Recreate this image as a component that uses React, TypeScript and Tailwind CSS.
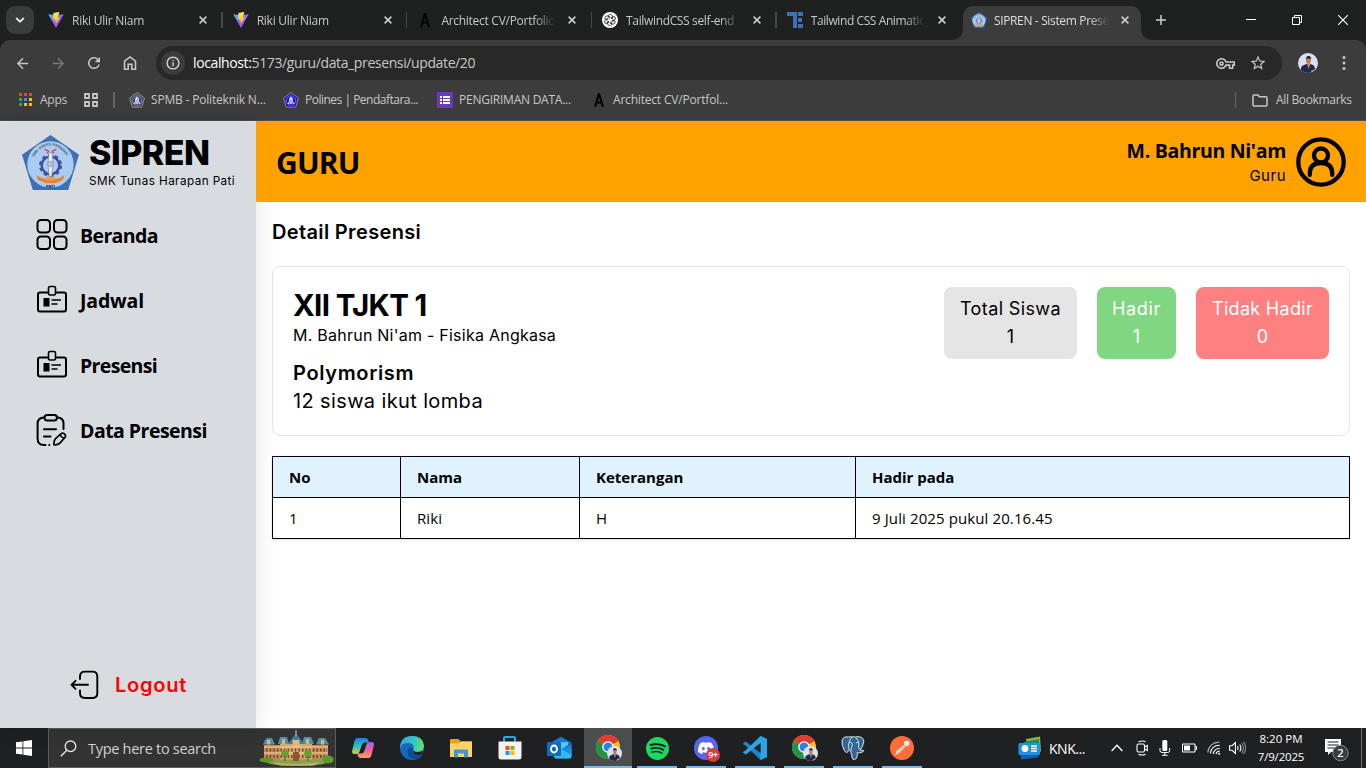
import React from "react";
import { SiSpotify, SiDiscord } from "react-icons/si";
import { MdArrowBack, MdArrowForward, MdRefresh, MdStarBorder, MdOutlineVpnKey } from "react-icons/md";

function ViteIcon() {
  return (
    <svg width="16" height="16" viewBox="0 0 16 16" className="shrink-0">
      <defs>
        <linearGradient id="viteBody" x1="0" y1="0" x2="0.7" y2="1">
          <stop offset="0" stopColor="#41d1ff" />
          <stop offset="0.5" stopColor="#8a6cff" />
          <stop offset="1" stopColor="#bd34fe" />
        </linearGradient>
        <linearGradient id="viteBolt" x1="0" y1="0" x2="0" y2="1">
          <stop offset="0" stopColor="#ffea83" />
          <stop offset="0.3" stopColor="#ffdd35" />
          <stop offset="1" stopColor="#ffa800" />
        </linearGradient>
      </defs>
      <path d="M0.3 2.2 L8 3.4 L15.7 2.2 L8.3 15.6 Q8 16 7.7 15.6 Z" fill="url(#viteBody)" />
      <path d="M11.4 0 L5.4 1 L5 7.6 L7.2 7.2 L6.6 9.6 L8 9.2 L7.4 12.6 L12 5.6 L9.8 5.9 Z" fill="url(#viteBolt)" />
    </svg>
  );
}

function CompassA() {
  return (
    <svg width="16" height="16" viewBox="0 0 16 16" className="shrink-0">
      <path d="M7.1 1h1.8l0.6 1.8L13 15h-2l-1.2-3.6H6.2L5 15H3L6.5 2.8zM8 5l-1.3 4.6h2.6z" fill="#050505" />
    </svg>
  );
}

function GptIcon() {
  return (
    <svg width="16" height="16" viewBox="0 0 16 16" className="shrink-0">
      <circle cx="8" cy="8" r="8" fill="#fff" />
      <g fill="none" stroke="#222" strokeWidth="0.8">
        {[0, 60, 120, 180, 240, 300].map((a) => (
          <path key={a} d="M8 6.2 L6.4 5.3 V3.9 a1.9 1.9 0 0 1 3.3 -1 L10.6 4.6 V7" transform={`rotate(${a} 8 8)`} />
        ))}
      </g>
    </svg>
  );
}

function TeIcon() {
  return (
    <svg width="16" height="16" viewBox="0 0 16 16" className="shrink-0" fill="#3f6fb8">
      <path d="M0 0h10v4H0z M6 4h4v12H6z M11 0h5v4h-5z M11 6h4v4h-4z M11 12h5v4h-5z" />
    </svg>
  );
}

function SchoolLogo({ className }: { className: string }) {
  return (
    <svg viewBox="0 0 58 56" className={className}>
      <path d="M29 0 L58 20 L47 56 H11 L0 20 Z" fill="#3f6fb5" />
      <circle cx="29" cy="30" r="23.6" fill="#a9cdf0" />
      <path id="logoArc" d="M11.500 23 Q29 -2 46.500 23" fill="none" />
      <text fontSize="4" fontFamily="Liberation Sans" fontWeight="700" fill="#4d5b73" textLength="42">
        <textPath href="#logoArc" startOffset="0.5" textLength="42">SMK TUNAS HARAPAN</textPath>
      </text>
      <circle cx="29" cy="31" r="9" fill="none" stroke="#3d4aa0" strokeWidth="2.400" />
      <circle cx="29" cy="31" r="10.800" fill="none" stroke="#3d4aa0" strokeWidth="1.800" strokeDasharray="3.600 3.300" />
      <path d="M27.400 18h3.200l1 11-1.200 13h-2.800l-1.200-13z" fill="#e9edf4" stroke="#6e7a8c" strokeWidth="0.600" />
      <circle cx="29" cy="29.500" r="3" fill="#b9c2cf" stroke="#7a8596" strokeWidth="0.500" />
      <path d="M23 14.500l4 2-1.600 2 M35 14.500l-4 2 1.600 2" stroke="#e0455a" strokeWidth="1.500" fill="none" />
      <path d="M15 41 Q29 50 43 41 L42 45.500 Q29 53 16 45.500 Z" fill="#ef7f2c" />
      <rect x="24.500" y="42.500" width="9" height="4" fill="#f39a4c" />
      <text x="29" y="54" textAnchor="middle" fontSize="4.200" fontFamily="Liberation Sans" fontWeight="700" fill="#111">
        PATI
      </text>
    </svg>
  );
}

function PolinesIcon({ blue, ring }: { blue: string; ring: string }) {
  return (
    <svg width="16" height="16" viewBox="0 0 16 16" className="shrink-0">
      <path d="M8 0.600 L15.500 6 L12.700 15.200 H3.300 L0.500 6 Z" fill={blue} stroke={ring} strokeWidth="0.900" strokeLinejoin="round" />
      <circle cx="8" cy="8.600" r="4.800" fill={blue} stroke="#b7bde8" strokeWidth="0.500" />
      <path d="M8 4.600l1.800 1.800v2.800l1.800 2.600H4.400l1.800-2.600V6.400z" fill="#f1efda" />
      <path d="M8 7v3.500M6.700 11.800V9.500M9.300 11.800V9.500" stroke={blue} strokeWidth="0.600" />
    </svg>
  );
}

function CloseIcon() {
  return (
    <svg width="8" height="8" viewBox="0 0 8 8" className="shrink-0">
      <path d="M0.600 0.600 L7.400 7.400 M7.400 0.600 L0.600 7.400" stroke="#cfcfcf" strokeWidth="1.500" />
    </svg>
  );
}

function Tab({ icon, title, last = false, tracking }: { icon: React.ReactNode; title: string; last?: boolean; tracking: string }) {
  return (
    <div className="flex h-10 w-[184.700px] shrink-0 items-center pl-[10px]">
      {icon}
      <div className="mt-px ml-2 w-[115px] overflow-hidden whitespace-nowrap text-[12px] text-[#c7c7c7] [mask-image:linear-gradient(to_right,#000_82%,transparent_99%)]">
        <span className={tracking}>{title}</span>
      </div>
      <div className="ml-[12px] flex flex-1 items-center justify-between">
        <CloseIcon />
        {!last && <div className="h-4 w-[1.5px] bg-[#464747]" />}
      </div>
    </div>
  );
}

function AvatarPhoto({ size }: { size: number }) {
  return (
    <svg width={size} height={size} viewBox="0 0 20 20" className="shrink-0">
      <defs>
        <clipPath id="avatarClip">
          <circle cx="10" cy="10" r="10" />
        </clipPath>
      </defs>
      <g clipPath="url(#avatarClip)">
        <rect width="20" height="20" fill="#dcdfee" />
        <path d="M3 20V15q0-2 3-3l2.500-1h4l2.500 1q2 1 2 4v4z" fill="#1d2a4f" />
        <path d="M9 11l1.500 5L12.500 11z" fill="#c9825f" />
        <ellipse cx="10.500" cy="7.800" rx="2.300" ry="3.200" fill="#b97a5c" />
        <path d="M8 7q-.3-4 2.600-4t2.500 4l-.8-1.600H8.800z" fill="#2a1c18" />
        <path d="M13 18l5-2v3l-4 1z" fill="#e9c65a" />
      </g>
    </svg>
  );
}

function BrowserChrome() {
  return (
    <div className="h-[121px] bg-[#1f2120] font-['Open_Sans',sans-serif]">
      <div className="flex h-10 items-center">
        <div className="ml-[6px] flex h-7 w-7 items-center justify-center rounded-[9px] bg-[#3a3b3b]">
          <svg width="10" height="6" viewBox="0 0 10 6">
            <path d="M1.200 1 L5 4.700 L8.800 1" fill="none" stroke="#e6e6e6" strokeWidth="1.800" />
          </svg>
        </div>
        <div className="ml-1 flex">
          <Tab icon={<ViteIcon />} title="Riki Ulir Niam" tracking="tracking-[-0.25px]" />
          <Tab icon={<ViteIcon />} title="Riki Ulir Niam" tracking="tracking-[-0.25px]" />
          <Tab icon={<CompassA />} title="Architect CV/Portfolio" tracking="tracking-[-0.28px]" />
          <Tab icon={<GptIcon />} title="TailwindCSS self-end" tracking="tracking-[-0.35px]" />
          <Tab icon={<TeIcon />} title="Tailwind CSS Animatio" tracking="tracking-[-0.41px]" last />
        </div>
        <div className="relative mt-[6px] ml-[1.5px] flex h-[34px] w-[178px] items-center rounded-t-[10px] bg-[#3c3c3c] pb-[6px] pl-2">
          <svg width="12" height="12" className="absolute -left-3 bottom-0">
            <path d="M12 0 V12 H0 Q12 12 12 0" fill="#3c3c3c" />
          </svg>
          <svg width="12" height="12" className="absolute -right-3 bottom-0">
            <path d="M0 0 V12 H12 Q0 12 0 0" fill="#3c3c3c" />
          </svg>
          <SchoolLogo className="h-4 w-4" />
          <div className="mt-px ml-[7px] w-[116px] overflow-hidden whitespace-nowrap text-[12px] text-[#dedede] [mask-image:linear-gradient(to_right,#000_82%,transparent_99%)]">
            <span className="tracking-[-0.35px]">SIPREN - Sistem Prese</span>
          </div>
          <div className="ml-[11px]">
            <CloseIcon />
          </div>
        </div>
        <svg width="10" height="10" viewBox="0 0 10 10" className="ml-[15px]">
          <path d="M5 0v10M0 5h10" stroke="#cfcfcf" strokeWidth="1.500" />
        </svg>
        <div className="ml-auto flex items-center pr-[18px]">
          <svg width="10" height="10" viewBox="0 0 10 10">
            <path d="M0 4.500h10" stroke="#fff" />
          </svg>
          <svg width="10" height="10" viewBox="0 0 10 10" className="ml-9" fill="none" stroke="#fff">
            <path d="M0.500 2.500h7v7h-7z M2.500 2.500v-2h7v7h-2" />
          </svg>
          <svg width="10" height="10" viewBox="0 0 10 10" className="ml-9">
            <path d="M0 0L10 10M10 0L0 10" stroke="#fff" strokeWidth="1.100" />
          </svg>
        </div>
      </div>
      <div className="h-[81px] rounded-t-[10px] border-b border-[#4a4b4b] bg-[#3c3c3c]">
        <div className="flex h-[46px] items-center pl-[13.500px] text-[#c7c7c7]">
          <MdArrowBack size={17} />
          <MdArrowForward size={17} className="ml-[19px] text-[#7b7b7b]" />
          <MdRefresh size={18} className="ml-[18.500px]" />
          <svg width="14" height="16" viewBox="0 0 14 16" className="ml-5" fill="none" stroke="#c7c7c7" strokeWidth="1.600">
            <path d="M1.500 6.200 L7 1.900 L12.500 6.200 V14.200 H8.800 V9.300 H5.200 V14.200 H1.500 Z" />
          </svg>
          <div className="ml-[19px] flex h-[34px] w-[1126px] items-center rounded-full bg-[#282828] pl-[5px]">
            <div className="flex h-6 w-6 items-center justify-center rounded-full bg-[#3c3c3c]">
              <svg width="14" height="14" viewBox="0 0 14 14" fill="none" stroke="#dcdcdc" strokeWidth="1.300">
                <circle cx="7" cy="7" r="5.900" />
                <path d="M7 6.200v4M7 3.700v1.400" />
              </svg>
            </div>
            <span className="mb-px ml-2 text-[14px] tracking-[-0.38px] whitespace-nowrap text-[#c7c7c7]">
              <span className="text-white">localhost:</span>5173/guru/data_presensi/update/20
            </span>
            <MdOutlineVpnKey size={19} className="mr-[14px] ml-auto" />
            <MdStarBorder size={18} className="mr-[15px]" />
          </div>
          <div className="ml-4">
            <AvatarPhoto size={20} />
          </div>
          <svg width="4" height="16" viewBox="0 0 4 16" className="ml-6" fill="#c7c7c7">
            <circle cx="2" cy="2.500" r="1.500" />
            <circle cx="2" cy="8" r="1.500" />
            <circle cx="2" cy="13.500" r="1.500" />
          </svg>
        </div>
        <div className="flex h-7 items-center pl-[19px] text-[12px] whitespace-nowrap text-[#c7c7c7]">
          <svg width="14" height="14" viewBox="0 0 14 14">
            <path d="M0 0h3v3H0zM5 0h3v3H5zM10 0h3v3h-3z" fill="#ea4335" />
            <path d="M0 5h3v3H0z" fill="#34a853" />
            <path d="M5 5h3v3H5z" fill="#4285f4" />
            <path d="M10 5h3v3h-3z" fill="#fbbc04" />
            <path d="M0 10h3v3H0z" fill="#34a853" />
            <path d="M5 10h3v3H5zM10 10h3v3h-3z" fill="#fbbc04" />
          </svg>
          <span className="ml-[7px] w-[44px] tracking-[-0.25px]">Apps</span>
          <svg width="14" height="14" viewBox="0 0 14 14" fill="none" stroke="#c7c7c7" strokeWidth="1.800">
            <path d="M1 1h4v4H1zM9 1h4v4H9zM1 9h4v4H1zM9 9h4v4H9z" />
          </svg>
          <div className="ml-[15px] h-4 w-[1.5px] bg-[#666]" />
          <div className="ml-[14px] flex w-[154px] items-center gap-[6.500px]">
            <PolinesIcon blue="#3d4486" ring="#a8a04c" />
            <span className="tracking-[-0.18px]">SPMB - Politeknik N...</span>
          </div>
          <div className="flex w-[154px] items-center gap-[6.500px]">
            <PolinesIcon blue="#1212e6" ring="#c08a2c" />
            <span className="tracking-[-0.5px]">Polines | Pendaftara...</span>
          </div>
          <div className="flex w-[154px] items-center gap-[6.500px]">
            <svg width="16" height="16" viewBox="0 0 16 16">
              <rect width="16" height="16" rx="1" fill="#673ab7" />
              <path d="M3 4h2v2H3zM3 7h2v2H3zM3 10h2v2H3zM6 4h7v2H6zM6 7h7v2H6zM6 10h7v2H6z" fill="#fff" />
            </svg>
            <span className="tracking-[-0.24px]">PENGIRIMAN DATA...</span>
          </div>
          <div className="flex items-center gap-[6.500px]">
            <CompassA />
            <span className="tracking-[-0.19px]">Architect CV/Portfol...</span>
          </div>
          <div className="mr-4 ml-auto h-4 w-[1.5px] bg-[#666]" />
          <svg width="16" height="13" viewBox="0 0 16 13" fill="none" stroke="#c7c7c7" strokeWidth="1.500">
            <path d="M1 11V2q0-1 1-1h4l1.500 1.800H14q1 0 1 1V11q0 1-1 1H2q-1 0-1-1z" />
          </svg>
          <span className="ml-2 w-[90px] tracking-[-0.34px]">All Bookmarks</span>
        </div>
      </div>
    </div>
  );
}

function GridIcon() {
  return (
    <svg width="32" height="32" viewBox="0 0 32 32" fill="none" stroke="#000" strokeWidth="2">
      <rect x="1.500" y="1" width="12.500" height="12.500" rx="3.500" />
      <rect x="18" y="1" width="12.500" height="12.500" rx="3.500" />
      <rect x="1.500" y="17.500" width="12.500" height="12.500" rx="3.500" />
      <rect x="18" y="17.500" width="12.500" height="12.500" rx="3.500" />
    </svg>
  );
}

function BadgeIcon() {
  return (
    <svg width="32" height="32" viewBox="0 0 32 32" fill="none" stroke="#000" strokeWidth="2">
      <path d="M12 8.500H4q-2 0-2 2V25.500q0 2 2 2H28q2 0 2-2V10.500q0-2-2-2H20" />
      <rect x="12.500" y="2.500" width="7" height="8.500" rx="1.500" strokeWidth="1.600" />
      <rect x="7.500" y="14" width="6" height="8.500" fill="#000" stroke="none" />
      <path d="M15.500 16h9.500M15.500 20h6" strokeWidth="1.600" />
    </svg>
  );
}

function ClipboardIcon() {
  return (
    <svg width="32" height="32" viewBox="0 0 32 32" fill="none" stroke="#000" strokeWidth="2" strokeLinecap="round">
      <rect x="8.500" y="1" width="12.500" height="5.500" rx="2.700" />
      <path d="M8 3.500Q1.600 3.800 1.600 9.500V24.500Q1.600 31 8 31H9.500 M22 3.500Q27.500 4 27.500 9.500V15 M13.200 31h.1 M8 15.300h12 M8 22.500h6.500" />
      <path d="M18 30.800q-.6-4 1.800-6.400l5-4.600q2-1.600 3.800.200t.1 3.800l-4.600 5q-2.300 2.400-6.100 2z M24.200 20.800q.8 2.400 3.300 3.200" strokeWidth="1.700" />
    </svg>
  );
}

function NavItem({ icon, label, tracking }: { icon: React.ReactNode; label: string; tracking: string }) {
  return (
    <div className="flex h-[65px] items-center gap-3 pl-9">
      {icon}
      <span className={`mt-[2px] text-[19.500px] leading-7 font-bold whitespace-nowrap ${tracking}`}>{label}</span>
    </div>
  );
}

function Sidebar() {
  return (
    <aside className="z-10 flex w-64 shrink-0 flex-col bg-[#d8dbe0] font-['Open_Sans',sans-serif] shadow-[0_0_20px_rgba(0,0,0,0.12)]">
      <div className="flex h-[81px] items-center pl-[22px]">
        <SchoolLogo className="mt-[2px] h-[55px] w-[57px]" />
        <div className="ml-[10px] flex flex-col whitespace-nowrap font-['Inter',sans-serif]">
          <span className="h-9 text-[34px] leading-9 font-extrabold tracking-[-0.5px]">SIPREN</span>
          <span className="mt-[2px] text-[11.700px] leading-4 tracking-[0.43px]">SMK Tunas Harapan Pati</span>
        </div>
      </div>
      <nav className="flex flex-col">
        <NavItem icon={<GridIcon />} label="Beranda" tracking="tracking-[-0.62px]" />
        <NavItem icon={<BadgeIcon />} label="Jadwal" tracking="tracking-[-0.17px]" />
        <NavItem icon={<BadgeIcon />} label="Presensi" tracking="tracking-[-0.66px]" />
        <NavItem icon={<ClipboardIcon />} label="Data Presensi" tracking="tracking-[-0.53px]" />
      </nav>
      <div className="mt-auto mb-[28px] flex h-[30px] items-center pl-[70px] font-['Inter',sans-serif]">
        <svg width="30" height="30" viewBox="0 0 30 30" fill="none" stroke="#000" strokeWidth="1.900" strokeLinecap="round">
          <path d="M10 9V6.500Q10 1.600 15 1.600H22.500Q27.300 1.600 27.300 6.500V23Q27.300 28 22.500 28H15Q10 28 10 23V20.500" />
          <path d="M18 14.800H1.800M5.500 10.800L1.600 14.800L5.500 18.800" />
        </svg>
        <span className="ml-[15px] text-[20px] font-semibold tracking-[0.75px] text-[#ff0000]">Logout</span>
      </div>
    </aside>
  );
}

function Stat({ label, value, className, tracking }: { label: string; value: string; className: string; tracking: string }) {
  return (
    <div className={`flex flex-col items-center rounded-lg py-2 leading-7 whitespace-nowrap text-[18px] ${className}`}>
      <span className={tracking}>{label}</span>
      <span>{value}</span>
    </div>
  );
}

const columns = [
  { head: "No", value: "1", width: "w-[128px]" },
  { head: "Nama", value: "Riki", width: "w-[179px]" },
  { head: "Keterangan", value: "H", width: "w-[276px]" },
  { head: "Hadir pada", value: "9 Juli 2025 pukul 20.16.45", width: "flex-1" },
];

function Main() {
  return (
    <div className="flex min-w-0 flex-1 flex-col bg-white">
      <header className="z-20 flex h-[81px] items-center justify-between bg-[#ffa200] pr-5 pl-5 font-['Open_Sans',sans-serif]">
        <span className="mt-px text-[30px] font-bold tracking-[-0.8px]">GURU</span>
        <div className="flex items-center gap-[10px]">
          <div className="mb-px flex flex-col items-end">
            <span className="text-[19.500px] leading-7 font-bold tracking-[-0.32px]">M. Bahrun Ni'am</span>
            <span className="font-['Inter',sans-serif] text-[15px] leading-[21px] tracking-[0.5px]">Guru</span>
          </div>
          <svg width="50" height="50" viewBox="0 0 50 50" fill="none" stroke="#000" strokeWidth="4.300" strokeLinecap="round">
            <circle cx="25" cy="25" r="22.700" />
            <circle cx="25" cy="18.500" r="7" />
            <path d="M13.800 38V36.500Q13.800 26 25 26T36.200 36.500V38" />
          </svg>
        </div>
      </header>
      <main className="flex flex-col gap-5 p-4 font-['Inter',sans-serif]">
        <h1 className="h-7 text-[20px] leading-7 font-semibold tracking-[0.35px] whitespace-nowrap">Detail Presensi</h1>
        <section className="flex h-[170px] justify-between rounded-lg border border-[#e5e5e5] p-5">
          <div className="flex flex-col items-start whitespace-nowrap">
            <span className="text-[29.500px] leading-9 font-bold tracking-[-0.66px]">XII TJKT 1</span>
            <span className="text-[16px] leading-6 tracking-[0.24px]">M. Bahrun Ni'am - Fisika Angkasa</span>
            <span className="mt-3 text-[20px] leading-7 font-semibold tracking-[0.64px]">Polymorism</span>
            <span className="text-[20px] leading-7 tracking-[0.37px]">12 siswa ikut lomba</span>
          </div>
          <div className="flex items-start gap-5">
            <Stat label="Total Siswa" value="1" className="w-[133px] bg-[#e5e5e5]" tracking="tracking-[0.38px]" />
            <Stat label="Hadir" value="1" className="w-[79px] bg-[#81d681] text-white" tracking="tracking-[0.7px]" />
            <Stat label="Tidak Hadir" value="0" className="w-[133px] bg-[#ff8080] text-white" tracking="tracking-[0.3px]" />
          </div>
        </section>
        <div className="border-t border-l border-black font-['Open_Sans',sans-serif] text-[15px] shadow-sm">
          <div className="flex h-[41px] bg-[#dff2fe] font-bold">
            {columns.map((c) => (
              <div key={c.head} className={`flex items-center border-r border-b border-black px-4 ${c.width}`}>{c.head}</div>
            ))}
          </div>
          <div className="flex h-[41px] tracking-[0.11px]">
            {columns.map((c) => (
              <div key={c.head} className={`flex items-center border-r border-b border-black px-4 ${c.width}`}>{c.value}</div>
            ))}
          </div>
        </div>
      </main>
    </div>
  );
}

function ChromeIcon() {
  return (
    <svg width="26" height="26" viewBox="0 0 26 26" className="ml-[2px]">
      <circle cx="12" cy="12" r="12" fill="#fbc116" />
      <path d="M12 12L1.600 6A12 12 0 0 1 22.400 6z" fill="#e33b2e" />
      <path d="M12 12L1.600 6A12 12 0 0 0 12 24L17.200 15z" fill="#229342" />
      <circle cx="12" cy="12" r="5.800" fill="#fff" />
      <circle cx="12" cy="12" r="4.500" fill="#2e7de9" />
      <g transform="translate(11 11)">
        <AvatarPhoto size={15} />
      </g>
    </svg>
  );
}

function CopilotIcon() {
  return (
    <svg width="24" height="24" viewBox="0 0 24 24">
      <defs>
        <linearGradient id="cop1" x1="0" y1="0" x2="0" y2="1">
          <stop offset="0" stopColor="#1f7bea" />
          <stop offset="0.5" stopColor="#2cc3c6" />
          <stop offset="1" stopColor="#ddc83a" />
        </linearGradient>
        <linearGradient id="cop2" x1="0" y1="0" x2="0" y2="1">
          <stop offset="0" stopColor="#b35ef0" />
          <stop offset="0.5" stopColor="#ee5e9f" />
          <stop offset="1" stopColor="#ffa05c" />
        </linearGradient>
      </defs>
      <path d="M6 2h8.500q2 0 2.600 2l.7 2.500H14q-2.500 0-3.300 2.600L8.600 15.500Q7.900 18 5.500 18H3.500Q.4 18 1.200 14.500L3.500 5Q4.300 2 6 2z" fill="url(#cop1)" />
      <path d="M18 22H9.500q-2 0-2.600-2l-.7-2.500H10q2.500 0 3.300-2.600l2.100-6.400Q16.100 6 18.500 6h2q3.100 0 2.300 3.500L20.500 19q-.8 3-2.500 3z" fill="url(#cop2)" />
    </svg>
  );
}

function EdgeIcon() {
  return (
    <svg width="24" height="24" viewBox="0 0 24 24">
      <defs>
        <linearGradient id="edgeTop" x1="0" y1="0.300" x2="1" y2="0.400">
          <stop offset="0" stopColor="#2ea7e8" />
          <stop offset="0.600" stopColor="#36c6c4" />
          <stop offset="1" stopColor="#66e35d" />
        </linearGradient>
      </defs>
      <circle cx="12" cy="12" r="12" fill="#1668bd" />
      <path d="M0 11Q1 0 12 0q11 0 12 9.500 0 6.500-6.500 6.500-5.500 0-4-3.200Q14.500 7 8 7 2 7 0 12z" fill="url(#edgeTop)" />
      <path d="M13 12q-2.500 7 5 7.500 2 0 4.800-1.500-2.300 4.500-6.800 5.500Q7 23 7.500 15 8 10.500 13 12z" fill="#124a90" />
      <path d="M13.600 11.500q-1.600 4.500 4 4.500 2.500 0 4.500-1l.9 2.800q-2.500 1.600-5.500 1.200-6-.8-3.900-7.500z" fill="#1f2022" />
    </svg>
  );
}

function ExplorerIcon() {
  return (
    <svg width="22" height="19" viewBox="0 0 22 19">
      <path d="M0 1q0-1 1-1h7.500l2 2.500H21q1 0 1 1V18H0z" fill="#e8a413" />
      <path d="M0 4.500h9L11 2.500H22V18H0z" fill="#fdd465" />
      <path d="M4 18.500V11.500q0-1 1-1h12q1 0 1 1v7h-4v-4H8v4z" fill="#3f95d5" />
    </svg>
  );
}

function StoreIcon() {
  return (
    <svg width="24" height="24" viewBox="0 0 24 24">
      <path d="M6 7V1.800Q6 1 7 1h9q1 0 1 .8V7" fill="none" stroke="#2aa8e0" strokeWidth="2" />
      <path d="M.5 5.500h23V21q0 2.500-2.500 2.500H3Q.5 23.500.5 21z" fill="#f3f3f3" />
      <path d="M7.500 10h4v4h-4z" fill="#f25022" />
      <path d="M12.500 10h4v4h-4z" fill="#7fba00" />
      <path d="M7.500 15h4v4h-4z" fill="#00a4ef" />
      <path d="M12.500 15h4v4h-4z" fill="#ffb900" />
    </svg>
  );
}

function OutlookIcon() {
  return (
    <svg width="25" height="24" viewBox="0 0 25 24">
      <path d="M4 6.500L14 .8 24 6.500V14H4z" fill="#1a78cf" />
      <path d="M7 6h14v9H7z" fill="#50c8f5" />
      <path d="M15 13L24.500 6.500V20q0 2.500-2.500 2.500H9q-2 0-2-2V17z" fill="#1c68c4" />
      <path d="M7 14l17.500-1V20q0 2.500-2.500 2.500H9q-2 0-2-2z" fill="#35b8f1" />
      <path d="M15 13.500L24.500 9v10z" fill="#1490df" />
      <rect x="0" y="6" width="14" height="14" rx="1" fill="#0f6cbd" />
      <ellipse cx="7" cy="13" rx="3" ry="3.500" fill="none" stroke="#fff" strokeWidth="1.800" />
    </svg>
  );
}

function VsCodeIcon() {
  return (
    <svg width="24" height="24" viewBox="0 0 24 24">
      <path d="M17.500 0L24 3v18l-6.500 3L2.200 9.200.2 8.200 0 7.500 2.300 5.600 3.400 5.900 17.500 16.800z" fill="#1b86cd" />
      <path d="M17.500 24L24 21V3L17.500 0 2.200 14.800.2 15.800 0 16.500 2.300 18.400 3.400 18.100 17.500 7.200z" fill="#2ba3ea" />
      <path d="M17.500 7.200v9.600L11 12z" fill="#222325" />
    </svg>
  );
}

function PostgresIcon() {
  return (
    <svg width="24" height="24" viewBox="0 0 24 24" stroke="#dfe7ee" strokeWidth="1" strokeLinejoin="round">
      <path
        d="M7.500 1Q2 .2 1 4.500q-.6 4.500 2.600 10.500 1.600 2.500 3.400.8l1.300-1.500q1 .8 1.700.7 0 1.500-.2 2.300.3.600.9.400l.3 4q.6 2.300 2.800 1.600 2-.5 2.200-2.500l.4-4.300q1 .6 3.500.1 2.600-.8 2.900-1.800-.2-.7-2.800-.5l-.8-.2q2.800-3.600 3.600-8.300Q22.800 1 17.500.7q-1.800-.1-3 .4-1.600-.6-3.600-.2-1.600-.6-3.400.1z"
        fill="#336791"
      />
      <path d="M8.300 14q-1.500-3.500-.5-6.200.5-4 3.100-6.800M14.500 1.200q3.300 2.800 3.200 6.600-.2 4 .6 5.900M8 6.800q1.800-1 3 0 .7 1.500-.2 4-.6 1.800-.8 4M14.800 7q1.400-.7 2.700-.2" fill="none" strokeWidth="0.900" />
    </svg>
  );
}

function PostmanIcon() {
  return (
    <svg width="24" height="24" viewBox="0 0 24 24">
      <circle cx="12" cy="12" r="12" fill="#ff6c37" />
      <path d="M5 19.200l1.400-3.700 7.100-6.300 1.600 1.700-6.700 6.700z" fill="#fff" />
      <path d="M5.800 18.400l8.500-8" stroke="#ff6c37" strokeWidth="0.700" />
      <circle cx="16.700" cy="7.500" r="2.700" fill="#fff" />
      <path d="M15.600 7.800q.9 1 2.400.3" stroke="#ff6c37" strokeWidth="0.700" fill="none" />
    </svg>
  );
}

function SearchArt() {
  return (
    <svg width="76" height="38" viewBox="0 0 76 38">
      <ellipse cx="39" cy="32.500" rx="31" ry="4.500" fill="#8aa04a" />
      <path d="M6 16h64v14H6z" fill="#c98b55" />
      <path d="M22 14.500h32v16H22z" fill="#dba468" />
      <path d="M7 11l2-2h5l3 6.500H5zM22 8h7l2 7H20zM46 8h7l3 7H44zM61 9h6l4 6.500H58z" fill="#4b93ae" />
      <path d="M9 11h3v4.500H9zM24 10h3v5h-3zM48 10h3v5h-3zM63 11h3v4.500h-3z" fill="#e0b27d" />
      <path d="M30 15L35 8l3-3 3 3 5 7z" fill="#3c7f9c" />
      <path d="M37.500 1h1v6h-1z" fill="#b8d4df" />
      <path d="M34.500 11h7v7h-7z" fill="#e8b577" />
      <path d="M6 18h64M6 24h64" stroke="#f3d2a2" strokeWidth="1" />
      <path d="M8 21h60M8 27.500h60" stroke="#6b4a3d" strokeWidth="3" strokeDasharray="1.500 2.100" />
      <path d="M35 23h6v9h-6z" fill="#8c5534" />
      <circle cx="27" cy="24.500" r="3.800" fill="#66a030" />
      <circle cx="50" cy="24.500" r="3.800" fill="#66a030" />
      <path d="M27 27v5M50 27v5" stroke="#6a4526" />
      <ellipse cx="8.500" cy="31" rx="7" ry="2.500" fill="#5d9a2a" />
      <ellipse cx="70" cy="30.500" rx="5.800" ry="4" fill="#5d9a2a" />
      <path d="M14 33q24 4 48 0l-6 3.500H22z" fill="#b8b26a" />
    </svg>
  );
}

function TaskItem({ children, state = "none" }: { children: React.ReactNode; state?: "none" | "open" | "active" }) {
  return (
    <div className="flex h-10 w-[49px] justify-center">
      <div className={`flex h-10 flex-col items-center ${state === "active" ? "w-12 bg-[#4b4d4f]" : "w-10"}`}>
        <div className="flex h-[38px] items-center pt-[2px]">{children}</div>
        {state !== "none" && <div className="h-[2px] w-full bg-[#76b9ed]" />}
      </div>
    </div>
  );
}

function Taskbar() {
  return (
    <div className="flex h-10 items-center bg-[#1f2022] font-['Open_Sans',sans-serif] whitespace-nowrap text-white">
      <svg width="16" height="16" viewBox="0 0 16 16" className="mr-4 ml-4" fill="#fff">
        <path d="M0 2.300L6.500 1.400V7.600H0zM7.300 1.300L16 0v7.600H7.300zM0 8.400h6.500v6.200L0 13.700zM7.300 8.400H16V16l-8.700-1.300z" />
      </svg>
      <div className="flex h-10 w-[288px] items-center border border-[#5c5c5c] bg-[#333] pl-[11px]">
        <svg width="17" height="17" viewBox="0 0 17 17" fill="none" stroke="#e8e8e8" strokeWidth="1.300">
          <circle cx="10.500" cy="6.300" r="5.300" />
          <path d="M6.800 10.200L.8 16.200" />
        </svg>
        <span className="mt-[2px] ml-[11px] text-[14.500px] tracking-[-0.29px] text-[#d0d0d0]">Type here to search</span>
        <div className="ml-auto pr-[1px]">
          <SearchArt />
        </div>
      </div>
      <div className="ml-[2.500px] flex">
        <TaskItem><CopilotIcon /></TaskItem>
        <TaskItem><EdgeIcon /></TaskItem>
        <TaskItem><ExplorerIcon /></TaskItem>
        <TaskItem><StoreIcon /></TaskItem>
        <TaskItem><OutlookIcon /></TaskItem>
        <TaskItem state="active"><ChromeIcon /></TaskItem>
        <TaskItem state="open"><SiSpotify size={23} color="#1ed760" /></TaskItem>
        <TaskItem state="open">
          <div className="relative flex h-6 w-6 items-center justify-center rounded-full bg-[#5865f2]">
            <SiDiscord size={16} color="#fff" />
            <div className="absolute -right-[2px] -bottom-[2px] flex h-[14px] w-[14px] items-center justify-center rounded-full bg-[#d83c3e] text-[9px] font-semibold tracking-[-0.5px]">9+</div>
          </div>
        </TaskItem>
        <TaskItem state="open"><VsCodeIcon /></TaskItem>
        <TaskItem state="open"><ChromeIcon /></TaskItem>
        <TaskItem state="open"><PostgresIcon /></TaskItem>
        <TaskItem state="open"><PostmanIcon /></TaskItem>
      </div>
      <div className="ml-auto flex items-center">
        <svg width="24" height="24" viewBox="0 0 24 24">
          <path d="M8 3l14-2.500 1 15-12 3z" fill="#8db83c" />
          <path d="M6 6l15-3v14l-14 4z" fill="#1f8a5f" />
          <path d="M2 10h13l6 6-1 5.500L3 23.500z" fill="#0f5fb5" />
          <rect x="0.500" y="7" width="21.500" height="12" rx="1.500" fill="#1d93e8" />
          <circle cx="7" cy="12.500" r="3.400" fill="#fff" />
          <path d="M13 10h6M13 12.500h6M13 15h6" stroke="#fff" strokeWidth="1.300" />
        </svg>
        <span className="ml-[7px] w-[62px] text-[14px] tracking-[-0.45px]">KNK...</span>
        <svg width="12" height="8" viewBox="0 0 12 8" fill="none" stroke="#fff" strokeWidth="1.300">
          <path d="M.6 7L6 1.200 11.400 7" />
        </svg>
        <svg width="12" height="16" viewBox="0 0 12 16" className="ml-[13px]" fill="none" stroke="#fff" strokeWidth="1.100">
          <rect x="1" y="4" width="7.500" height="8" rx="1.500" />
          <path d="M8.500 7l2.800-1.500v5L8.500 9M2.500 1.800q3.500-1.600 7 0M2.500 14.200q3.500 1.600 7 0" />
        </svg>
        <svg width="12" height="16" viewBox="0 0 12 16" className="ml-[11px]">
          <rect x="3.300" y="0" width="5" height="11" rx="1.500" fill="#fff" />
          <path d="M1 8v2.500q0 2 2 2h5.600q2 0 2-2V8M5.800 12.500v2.500M3 15.300h5.600" fill="none" stroke="#fff" />
        </svg>
        <svg width="16" height="10" viewBox="0 0 16 10" className="ml-[11px]" fill="none" stroke="#fff">
          <path d="M.5 1h12.500v8H.5zM13 3.500h1.500v3H13" />
          <path d="M2 2.500h6v5H2z" fill="#fff" stroke="none" />
        </svg>
        <svg width="14" height="14" viewBox="0 0 14 14" className="ml-[9px]" fill="none" stroke="#fff" strokeWidth="1.100">
          <path d="M.8 11.500A11 11 0 0 1 12.500 1.200" stroke="#aaa" />
          <path d="M3.300 12.500A9 9 0 0 1 12.700 4.200M6.200 13A6.500 6.500 0 0 1 12.800 7.200M9 13.200A4 4 0 0 1 12.800 10" />
          <circle cx="12.200" cy="12.800" r="1" fill="#fff" stroke="none" />
        </svg>
        <svg width="17" height="14" viewBox="0 0 17 14" className="ml-2" fill="none" stroke="#fff" strokeWidth="1.100">
          <path d="M.6 4.700h2.600L6.400 1.500v11L3.200 9.300H.6zM8.500 5q1.300 2 0 4M10.700 3.500q2.300 3.500 0 7" />
          <path d="M12.700 2q3.400 5 0 10M14.600 .8q4 6.200 0 12.400" stroke="#888" />
        </svg>
        <div className="ml-[10px] flex w-[50px] flex-col items-center text-[11.500px] leading-[18px]">
          <span>8:20 PM</span>
          <span className="tracking-[-0.2px]">7/9/2025</span>
        </div>
        <div className="relative ml-[18px] h-6 w-[26px]">
          <svg width="26" height="26" viewBox="0 0 26 26">
            <path d="M1 3h16v13H7l-3 3v-3H1z" fill="#fff" />
            <path d="M3.500 6h11M3.500 9h11M3.500 12h8" stroke="#1f2022" strokeWidth="1.200" />
            <circle cx="16.500" cy="17" r="7.700" fill="#3a3b3d" stroke="#8a8a8a" />
          </svg>
          <span className="absolute top-[9px] left-[9px] w-[15px] text-center text-[11px] leading-4 font-semibold">2</span>
        </div>
        <div className="mr-1 ml-[11px] h-10 w-px bg-[#6e6e6e]" />
      </div>
    </div>
  );
}

export default function App() {
  return (
    <div className="flex h-[768px] w-[1366px] flex-col overflow-hidden bg-white text-black">
      <BrowserChrome />
      <div className="flex min-h-0 flex-1">
        <Sidebar />
        <Main />
      </div>
      <Taskbar />
    </div>
  );
}
